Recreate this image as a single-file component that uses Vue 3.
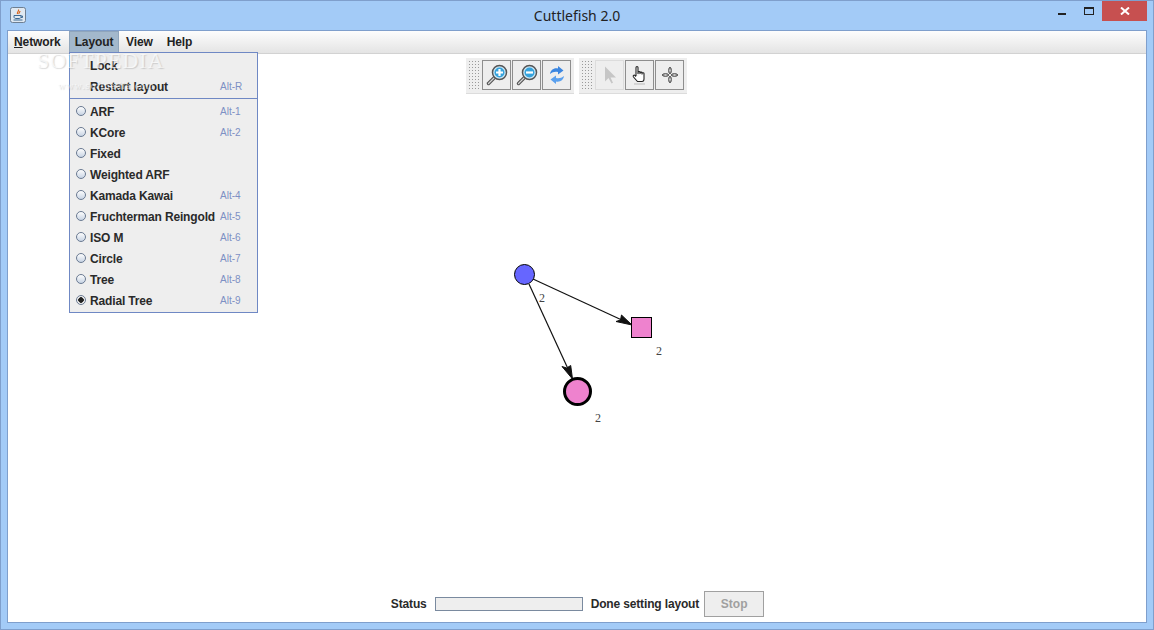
<template>
  <div class="window">
    <div class="titlebar">
      <div class="app-icon">
        <svg width="16" height="16" viewBox="0 0 16 16">
          <rect x="0.5" y="0.5" width="15" height="15" rx="2" fill="#dfe8f1" stroke="#6d7f92" />
          <path d="M8.5 2.5c1 1.5-2 2.5-1 4.5M10 4c0 1.3-1.6 1.6-1 3" fill="none" stroke="#d8641c" stroke-width="1.2" />
          <path d="M4 8.5h7v1.5c0 1-1 1.5-2 1.500H6c-1 0-2-.5-2-1.500zM11 9h1.500v1.500H11" fill="none" stroke="#3d6a94" stroke-width="1" />
          <path d="M3.500 13h9" stroke="#3d6a94" stroke-width="1" />
        </svg>
      </div>
      <div class="title">Cuttlefish 2.0</div>
      <div class="win-controls">
        <div class="win-btn"><span class="min-glyph"></span></div>
        <div class="win-btn"><span class="max-glyph"></span></div>
        <div class="close-btn">
          <svg width="10" height="8" viewBox="0 0 10 8">
            <path d="M1 .5l8 7M9 .5l-8 7" stroke="#fff" stroke-width="2" />
          </svg>
        </div>
      </div>
    </div>

    <div class="content">
      <div class="menubar">
        <div class="menu-item network"><u>N</u>etwork</div>
        <div class="menu-item active">Layout</div>
        <div class="menu-item">View</div>
        <div class="menu-item">Help</div>
      </div>

      <div class="toolbars">
        <div class="toolbar">
          <div class="grip"></div>
          <button class="tool">
            <svg width="24" height="24" viewBox="0 0 24 24">
              <path d="M10 14l-6.500 6.500" stroke="#555" stroke-width="3.500" stroke-linecap="round" />
              <path d="M10 14l-6.500 6.500" stroke="#d4d4d4" stroke-width="1.200" stroke-linecap="round" />
              <circle cx="14.500" cy="9.500" r="7" fill="#cfe8f5" stroke="#555" stroke-width="1.500" />
              <circle cx="14.500" cy="9.500" r="5" fill="#36a3dc" />
              <path d="M14.500 6v7M11 9.500h7" stroke="#fff" stroke-width="2.200" />
            </svg>
          </button>
          <button class="tool">
            <svg width="24" height="24" viewBox="0 0 24 24">
              <path d="M10 14l-6.500 6.500" stroke="#555" stroke-width="3.500" stroke-linecap="round" />
              <path d="M10 14l-6.500 6.500" stroke="#d4d4d4" stroke-width="1.200" stroke-linecap="round" />
              <circle cx="14.500" cy="9.500" r="7" fill="#cfe8f5" stroke="#555" stroke-width="1.500" />
              <circle cx="14.500" cy="9.500" r="5" fill="#36a3dc" />
              <path d="M11 9.500h7" stroke="#fff" stroke-width="2.200" />
            </svg>
          </button>
          <button class="tool">
            <svg width="24" height="24" viewBox="0 0 24 24">
              <path d="M5 11c.5-4 4-6.500 8-5.500V3l5.500 4.500-5.500 4V9c-3-.7-5.500 0-8 2z" fill="#3b86e0" />
              <path d="M19 13c-.5 4-4 6.500-8 5.500V21l-5.500-4.500 5.500-4V15c3 .7 5.500 0 8-2z" fill="#5aa0ee" />
            </svg>
          </button>
        </div>
        <div class="toolbar">
          <div class="grip"></div>
          <button class="tool disabled">
            <svg width="24" height="24" viewBox="0 0 24 24">
              <path d="M7 3.500v15l3.500-3.500 3 5.500 1.500-.8-2.500-5.200H18z" fill="#c6c6c6" />
            </svg>
          </button>
          <button class="tool">
            <svg width="24" height="24" viewBox="0 0 24 24">
              <path d="M8 13V4.500c0-1.300 2-1.300 2 0V11m0-1.500c0-1.200 2-1.200 2 0V11m0-1c0-1.200 2-1.200 2 0v1.500m0-1c0-1.100 2-1.100 2 0V16c0 1.500-1 2.500-2 2.500H9.500L5.500 14c-1-1.200.6-2.500 1.500-1.500L8 13.500" fill="#fff" stroke="#222" stroke-width="1.100" />
              <path d="M6 21h11" stroke="#bbb" stroke-width="1" />
            </svg>
          </button>
          <button class="tool">
            <svg width="24" height="24" viewBox="0 0 24 24">
              <ellipse cx="12" cy="7.500" rx="1.200" ry="3.200" fill="#fff" stroke="#222" />
              <ellipse cx="12" cy="16.500" rx="1.200" ry="3.200" fill="#fff" stroke="#222" />
              <ellipse cx="7.500" cy="12" rx="3.200" ry="1.200" fill="#fff" stroke="#222" />
              <ellipse cx="16.500" cy="12" rx="3.200" ry="1.200" fill="#fff" stroke="#222" />
            </svg>
          </button>
        </div>
      </div>

      <div class="canvas">
        <svg class="graph" width="1138" height="500" viewBox="0 0 1138 500">
          <g transform="translate(-8 -94)">
            <line x1="533" y1="279" x2="624" y2="321" class="edge" />
            <path d="M632 325l-16-3.500 4.500-1.500 1-5z" fill="#111" stroke="#111" />
            <line x1="529" y1="284" x2="569" y2="371" class="edge" />
            <path d="M572.500 379l-10.500-12.500 4.700 1.500 4-2.500z" fill="#111" stroke="#111" />
            <circle cx="524.500" cy="274.500" r="10" fill="#6666ff" stroke="#000" />
            <rect x="631.500" y="317.500" width="20" height="20" fill="#ee82ce" stroke="#000" />
            <circle cx="577.500" cy="391.500" r="13" fill="#ee82ce" stroke="#000" stroke-width="3" />
            <text x="539" y="302" class="node-label">2</text>
            <text x="656" y="355" class="node-label">2</text>
            <text x="595" y="422" class="node-label">2</text>
          </g>
        </svg>
      </div>

      <div class="statusbar">
        <span class="status-label">Status</span>
        <div class="progress"></div>
        <span class="status-text">Done setting layout</span>
        <button class="stop" disabled>Stop</button>
      </div>

      <div class="dropdown">
        <div class="drop-row"><span class="drop-name">Lock</span></div>
        <div class="drop-row"><span class="drop-name">Restart layout</span><span class="shortcut">Alt-R</span></div>
        <div class="drop-sep"></div>
        <div v-for="item in layouts" :key="item.name" class="drop-row">
          <span class="radio" :class="{ checked: item.name === 'Radial Tree' }"></span>
          <span class="drop-name">{{ item.name }}</span>
          <span class="shortcut">{{ item.key }}</span>
        </div>
      </div>

      <!-- site watermark sits over the menu in the screenshot -->
      <div class="watermark">
        <div class="wm-big">SOFTPEDIA</div>
        <div class="wm-small">www.softpedia.com</div>
      </div>
    </div>
  </div>
</template>

<script setup>
const layouts = [
  { name: 'ARF', key: 'Alt-1' },
  { name: 'KCore', key: 'Alt-2' },
  { name: 'Fixed', key: '' },
  { name: 'Weighted ARF', key: '' },
  { name: 'Kamada Kawai', key: 'Alt-4' },
  { name: 'Fruchterman Reingold', key: 'Alt-5' },
  { name: 'ISO M', key: 'Alt-6' },
  { name: 'Circle', key: 'Alt-7' },
  { name: 'Tree', key: 'Alt-8' },
  { name: 'Radial Tree', key: 'Alt-9' }
]
</script>

<style>
html, body {
  margin: 0;
  overflow: hidden;
}
</style>

<style scoped>
.window {
  width: 1154px;
  height: 630px;
  box-sizing: border-box;
  background: #a3cbf7;
  border: 1px solid #7f9fcc;
  display: flex;
  flex-direction: column;
  font-family: "Liberation Sans", Arial, sans-serif;
  overflow: hidden;
}
.titlebar {
  height: 29px;
  flex-shrink: 0;
  position: relative;
  display: flex;
  align-items: center;
}
.app-icon {
  margin-left: 9px;
  margin-top: -1px;
  display: flex;
}
.title {
  position: absolute;
  left: 0;
  right: 0;
  top: 6px;
  text-align: center;
  font-size: 14px;
  line-height: 18px;
  color: #222;
  font-family: "Noto Sans", "Liberation Sans", sans-serif;
}
.win-controls {
  position: absolute;
  top: 0;
  right: 6px;
  display: flex;
}
.win-btn {
  width: 27px;
  height: 20px;
  position: relative;
}
.min-glyph {
  position: absolute;
  left: 11px;
  top: 12px;
  width: 8px;
  height: 2px;
  background: #222;
}
.max-glyph {
  position: absolute;
  left: 10px;
  top: 6px;
  width: 8px;
  height: 5px;
  border: 1px solid #222;
  border-top-width: 2px;
}
.close-btn {
  width: 45px;
  height: 20px;
  background: #c75050;
  display: flex;
  align-items: center;
  justify-content: center;
  margin-left: 1px;
}
.content {
  flex: 1;
  margin: 0 6px 6px 6px;
  background: #fff;
  border: 1px solid #7f9fcc;
  display: flex;
  flex-direction: column;
  position: relative;
  min-height: 0;
}
.menubar {
  height: 22px;
  flex-shrink: 0;
  display: flex;
  background: linear-gradient(#fdfdfd, #e4e4e4);
  border-bottom: 1px solid #d2d2d2;
  font-size: 12px;
  font-weight: bold;
  color: #222;
  letter-spacing: -0.1px;
}
.menu-item {
  padding: 0 7px;
  line-height: 22px;
  height: 22px;
}
.menu-item.network {
  width: 61px;
  box-sizing: border-box;
  padding: 0 0 0 6px;
}
.menu-item.active {
  width: 50px;
  box-sizing: border-box;
  padding: 0;
  text-align: center;
  background: #a3b8cc;
  border: 1px solid #8fa5bc;
  border-bottom: none;
  line-height: 20px;
}
.toolbars {
  display: flex;
  justify-content: center;
  gap: 5px;
  margin-top: 4px;
  padding-right: 1px;
  flex-shrink: 0;
}
.toolbar {
  display: flex;
  height: 36px;
  box-sizing: border-box;
  padding: 2px 3px 4px 2px;
  gap: 1px;
  background: #eeeeee;
  border-bottom: 1px solid #dcdcdc;
}
.grip {
  width: 11px;
  margin-right: 2px;
  background-image: radial-gradient(#9a9a9a 0.6px, transparent 0.8px);
  background-size: 3px 3px;
}
.tool {
  width: 29px;
  height: 30px;
  box-sizing: border-box;
  padding: 0;
  background: #eeeeee;
  border: 1px solid #8e8e8e;
  display: flex;
  align-items: center;
  justify-content: center;
}
.tool.disabled {
  border-color: #dcdcdc;
}
.canvas {
  flex: 1;
  position: relative;
  min-height: 0;
}
.graph {
  position: absolute;
  left: 0;
  top: 0;
}
.edge {
  stroke: #111;
  stroke-width: 1.2;
}
.node-label {
  font-family: "Liberation Serif", serif;
  font-size: 12px;
  fill: #444;
}
.statusbar {
  height: 32px;
  flex-shrink: 0;
  display: flex;
  align-items: center;
  justify-content: center;
  font-size: 12px;
  font-weight: bold;
  color: #2a2a2a;
  letter-spacing: -0.15px;
  box-sizing: border-box;
  padding: 0 0 4px 1px;
}
.progress {
  width: 148px;
  height: 14px;
  box-sizing: border-box;
  background: #eeeeee;
  border: 1px solid #7a8a9f;
  margin: 0 8px;
}
.stop {
  width: 60px;
  height: 26px;
  box-sizing: border-box;
  margin-left: 5px;
  background: #eeeeee;
  border: 1px solid #a0a0a0;
  color: #a0a0a0;
  font: bold 12px "Liberation Sans", Arial, sans-serif;
  padding: 0;
}
.watermark {
  position: absolute;
  left: 29px;
  top: 18px;
  pointer-events: none;
  font-family: "Liberation Serif", serif;
  z-index: 6;
}
.wm-big {
  font-size: 22px;
  line-height: 24px;
  letter-spacing: 1px;
  color: rgba(255, 255, 255, 0.7);
  text-shadow: 1px 1px 1px rgba(140, 140, 140, 0.35);
}
.wm-small {
  font-size: 10px;
  line-height: 12px;
  margin: 7px 0 0 21px;
  letter-spacing: 1px;
  color: rgba(255, 255, 255, 0.6);
  text-shadow: 1px 1px 1px rgba(140, 140, 140, 0.3);
}
.dropdown {
  position: absolute;
  left: 61px;
  top: 21px;
  width: 189px;
  height: 261px;
  box-sizing: border-box;
  background: #eeeeee;
  border: 1px solid #6f88c4;
  padding-top: 2px;
  z-index: 5;
}
.drop-row {
  height: 21px;
  display: flex;
  align-items: center;
  position: relative;
  padding-left: 20px;
  font-size: 12px;
  font-weight: bold;
  color: #2a2a2a;
  letter-spacing: -0.15px;
}
.drop-sep {
  height: 1px;
  background: #6f88c4;
  margin: 1px 0 2px;
}
.radio {
  position: absolute;
  left: 6px;
  top: 5px;
  width: 10px;
  height: 10px;
  box-sizing: border-box;
  border: 1px solid #6a7a92;
  border-radius: 50%;
  background: linear-gradient(#fdfdfd, #c8d4e4);
}
.radio.checked {
  background: radial-gradient(circle, #222 0 2.5px, #eee 3px);
}
.shortcut {
  position: absolute;
  left: 150px;
  font-size: 10px;
  font-weight: normal;
  letter-spacing: 0;
  color: #7d90c4;
}
</style>
